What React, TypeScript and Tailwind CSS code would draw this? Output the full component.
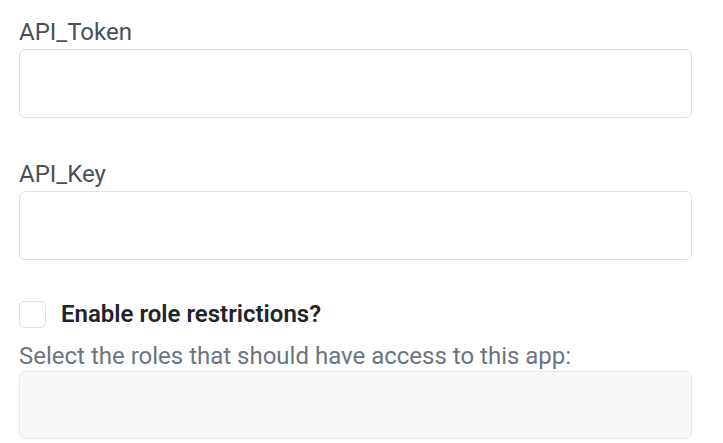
import React from "react"

const font = { fontFamily: "Roboto, 'Open Sans', sans-serif" }

const Field = ({ label, className = "" }: { label: string; className?: string }) => (
    <div className={`flex flex-col ${className}`}>
        <label className="h-[32px] text-[24px] leading-[32px] text-[#495057]">{label}</label>
        <input
            type="text"
            className="mt-[1px] h-[69px] w-[673px] rounded-[6px] border border-[#dfe2e5] bg-white px-3 outline-none"
        />
    </div>
)

export default function App() {
    return (
        <div className="h-[443px] w-[723px] bg-white pl-[19px] pt-[16px]" style={font}>
            <Field label="API_Token" />
            <Field label="API_Key" className="mt-[40px]" />

            <div className="mt-[38px] flex h-[32px] items-center">
                <span className="h-[27px] w-[27px] rounded-[5px] border border-[#dfe2e5] bg-white"></span>
                <span className="ml-[15px] text-[24px] font-semibold leading-[32px] text-[#212529]">
                    Enable role restrictions?
                </span>
            </div>

            <p className="mt-[11px] h-[30px] text-[24px] leading-[30px] text-[#6c757d]">
                Select the roles that should have access to this app:
            </p>
            <div className="h-[68px] w-[673px] rounded-[6px] border border-[#e6e9eb] bg-[#f7f8f8]"></div>
        </div>
    )
}
